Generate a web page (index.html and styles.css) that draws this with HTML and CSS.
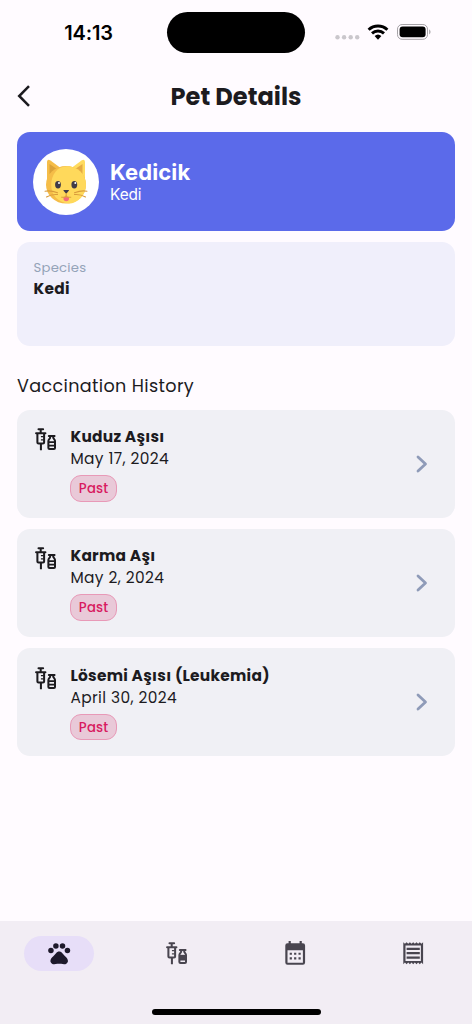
FILE: index.html
```html
<!DOCTYPE html>
<html lang="en">
<head>
<meta charset="utf-8">
<title>Pet Details</title>
<link rel="stylesheet" href="styles.css">
</head>
<body>
<svg class="defs" aria-hidden="true">
  <symbol id="vaccine" viewBox="0 0 24 24">
    <g fill="none" stroke="currentColor" stroke-width="1.850" stroke-linejoin="round">
      <path d="M5 3h4.200M2.800 6.500h8.500" stroke-linecap="round"/>
      <path d="M7 3v3.500M4 6.500V15q0 1 1 1h4.100q1 0 1-1V6.500M7.200 16v6"/>
      <path d="M7.200 9.600h2.500M7.200 12.600h2.500" stroke-width="1.200"/>
      <path d="M14.400 9h5.200" stroke-linecap="round"/>
      <path d="M15.600 9v1.500c0 1-1.600 1.500-1.600 3.200V20q0 1 1 1h4q1 0 1-1v-6.300c0-1.700-1.600-2.200-1.600-3.200V9"/>
      <path d="M14 14.700h6M14 17.800h6" stroke-width="1.600"/>
    </g>
  </symbol>
  <symbol id="next" viewBox="0 0 12 18"><path d="M2 2l7.500 7L2 16" fill="none" stroke="currentColor" stroke-width="2.800" stroke-linecap="round" stroke-linejoin="round"/></symbol>
</svg>
<div class="screen">
  <header class="status">
    <span class="time">14:13</span>
    <span class="island"></span>
    <svg class="signals" viewBox="0 0 98 20">
      <g fill="#cac7cc"><circle cx="2.500" cy="13.200" r="2.200"/><circle cx="9.100" cy="13.200" r="2.200"/><circle cx="15.700" cy="13.200" r="2.200"/><circle cx="22.200" cy="13.200" r="2.200"/></g>
      <g fill="none" stroke="#000" stroke-width="2.900"><path d="M33.600 5.800a13.500 13.500 0 0 1 18.800 0"/><path d="M37 9.400a8.700 8.700 0 0 1 12 0"/></g>
      <path d="M39.600 12.100a5 5 0 0 1 6.800 0L43 15.700z"/>
      <rect x="62.500" y=".5" width="30" height="14.800" rx="4.600" fill="none" stroke="#a5a2a6"/>
      <rect x="64.600" y="2.600" width="26" height="10.600" rx="3"/>
      <path d="M94.200 5.200q2.700 2.700 0 5.400z" fill="#a5a2a6"/>
    </svg>
  </header>
  <div class="appbar">
    <svg class="back" viewBox="0 0 14 22"><path d="M12 1.200L2.200 11 12 20.800" fill="none" stroke="#1c1b1f" stroke-width="2.500"/></svg>
    <h1>Pet Details</h1>
  </div>
  <main>
    <section class="hero">
      <svg class="avatar" viewBox="0 0 66 66">
        <circle cx="33" cy="33" r="33" fill="#fff"/>
        <path d="M14 33V12.500Q14.500 9.800 17.500 11.500L29 20z" fill="#f5bd48"/>
        <path d="M52 33V12.500Q51.500 9.800 48.500 11.500L37 20z" fill="#ffdb5e"/>
        <path d="M16.500 25V15l8 5.500z" fill="#dba239"/><path d="M49.500 25V15l-8 5.500z" fill="#e5aa43"/>
        <ellipse cx="33" cy="35.800" rx="20" ry="18.800" fill="#f5bd48"/>
        <path d="M34 17.200c10.500 0 19 8 19 18.500S45 54.500 35.500 54.500C25 53.500 18.200 46 18.200 36S24 17.200 34 17.200z" fill="#ffd95b"/>
        <ellipse cx="25" cy="35.800" rx="2.900" ry="3.700" fill="#403b48"/><ellipse cx="41.300" cy="35.800" rx="2.900" ry="3.700" fill="#403b48"/>
        <circle cx="26" cy="34" r="1" fill="#fff"/><circle cx="42.300" cy="34" r="1" fill="#fff"/>
        <path d="M30.500 48h5.500v1.500a2.750 2.750 0 0 1-5.500 0z" fill="#f36b7d"/>
        <path d="M33.200 43v3q0 2.300-2.600 2.300h-2.400M33.200 46q0 2.300 2.600 2.300h2.400" fill="none" stroke="#dda33b" stroke-width="1.100"/>
        <path d="M30.700 41h5q.5 0 .1.700l-1.700 2.100q-.9 1-1.800 0l-1.700-2.100q-.4-.7.100-.7z" fill="#403b48"/>
        <g fill="none" stroke="#d99b3b" stroke-width="1.100" stroke-linecap="round"><path d="M12 42.200q6-1 12.500 1.600M13.500 48q5-3 11-2.500M54 42.200q-6-1-12.500 1.600M52.500 48q-5-3-11-2.500"/></g>
      </svg>
      <div><div class="name">Kedicik</div><div class="kind">Kedi</div></div>
    </section>
    <section class="species"><div class="label">Species</div><div class="value">Kedi</div></section>
    <h2>Vaccination History</h2>
    <ul class="list">
      <li><svg class="icon"><use href="#vaccine"/></svg><div class="body"><div class="vaccine">Kuduz Aşısı</div><div class="date">May 17, 2024</div><span class="chip">Past</span></div><svg class="next"><use href="#next"/></svg></li>
      <li><svg class="icon"><use href="#vaccine"/></svg><div class="body"><div class="vaccine">Karma Aşı</div><div class="date">May 2, 2024</div><span class="chip">Past</span></div><svg class="next"><use href="#next"/></svg></li>
      <li><svg class="icon"><use href="#vaccine"/></svg><div class="body"><div class="vaccine">Lösemi Aşısı (Leukemia)</div><div class="date">April 30, 2024</div><span class="chip">Past</span></div><svg class="next"><use href="#next"/></svg></li>
    </ul>
  </main>
  <nav>
    <div class="tabs">
      <span class="tab active"><svg class="icon" viewBox="0 0 24 24"><circle cx="4.500" cy="9.500" r="2.500"/><circle cx="9" cy="5.500" r="2.500"/><circle cx="15" cy="5.500" r="2.500"/><circle cx="19.500" cy="9.500" r="2.500"/><path d="M17.340 14.860c-.87-1.020-1.600-1.890-2.480-2.910-.46-.54-1.050-1.080-1.750-1.320-.11-.04-.22-.07-.33-.09-.25-.04-.52-.04-.78-.04s-.53 0-.79.050c-.11.020-.22.050-.33.090-.7.240-1.280.780-1.750 1.320-.87 1.020-1.600 1.890-2.480 2.910-1.310 1.310-2.920 2.760-2.620 4.790.29 1.020 1.020 2.030 2.330 2.320.73.150 3.060-.44 5.540-.44h.18c2.480 0 4.810.58 5.540.44 1.310-.29 2.040-1.310 2.330-2.320.31-2.040-1.300-3.490-2.610-4.800z"/></svg></span>
      <span class="tab"><svg class="icon" viewBox="0 0 24 24"><use href="#vaccine"/><path d="M14 13.500h6v4h-6z"/></svg></span>
      <span class="tab"><svg class="icon" viewBox="0 0 24 24"><path fill-rule="evenodd" d="M6 1h2v2h8V1h2v2h1a2 2 0 0 1 2 2v15.500a2 2 0 0 1-2 2H5a2 2 0 0 1-2-2V5a2 2 0 0 1 2-2h1zM5 9.300v11.300h14V9.300z"/><path d="M7 11.500h2v2H7zM11 11.500h2v2h-2zM15 11.500h2v2h-2zM7 15.800h2v2H7zM11 15.800h2v2h-2zM15 15.800h2v2h-2z"/></svg></span>
      <span class="tab"><svg class="icon" viewBox="0 0 24 24"><path d="M19.500 3.500L18 2l-1.500 1.500L15 2l-1.500 1.500L12 2l-1.500 1.500L9 2 7.500 3.500 6 2 4.500 3.500 3 2v20l1.500-1.500L6 22l1.500-1.500L9 22l1.500-1.500L12 22l1.500-1.500L15 22l1.500-1.500L18 22l1.500-1.500L21 22V2zM19 19.090H5V4.910h14zM6 15h12v2H6zM6 11h12v2H6zM6 7h12v2H6z"/></svg></span>
    </div>
    <span class="home"></span>
  </nav>
</div>
</body>
</html>
```

FILE: styles.css
```css
* { box-sizing: border-box; }
body { margin: 0; background: #fffbff; color: #1c1b1f; font-family: Poppins, Inter, sans-serif; }
.defs { display: none; }
.screen { width: 472px; height: 1024px; display: flex; flex-direction: column; overflow: hidden; }
.status { height: 65px; display: grid; grid-template-columns: 167px 138px 1fr; align-items: center; flex: none; }
.time { padding-left: 10px; text-align: center; font: 600 20px/24px Inter, sans-serif; letter-spacing: -.2px; color: #000; }
.island { height: 41px; border-radius: 21px; background: #000; }
.signals { width: 98px; height: 20px; margin-left: 29.500px; margin-top: 2.500px; }
.appbar { height: 67px; display: grid; grid-template-columns: 40px 1fr 40px; align-items: center; flex: none; padding: 0 17px 5px; }
.back { width: 14px; height: 22px; }
h1 { margin: 1px 0 0; text-align: center; font-size: 24.100px; line-height: 31px; font-weight: 700; }
main { flex: 1; padding: 0 17px; }
.hero { height: 99px; border-radius: 13px; background: #5b6aea; display: flex; align-items: center; padding: 0 16px; gap: 11px; color: #fff; }
.avatar { width: 66px; height: 66px; }
.name { font: 700 22px/25px Inter, sans-serif; letter-spacing: .1px; }
.kind { font: 400 15.400px/19px Inter, sans-serif; letter-spacing: -.1px; }
.species { height: 104px; margin-top: 11px; border-radius: 13px; background: #f0effb; padding: 16px 16.500px; }
.label { font-size: 13.200px; line-height: 20px; color: #94a3b8; letter-spacing: .25px; }
.value { font-size: 15.400px; line-height: 21px; font-weight: 700; letter-spacing: .25px; }
h2 { margin: 25px 0 8.500px; font-size: 17.600px; line-height: 30px; font-weight: 400; letter-spacing: .35px; }
.list { list-style: none; margin: 0; padding: 0; display: grid; gap: 11.300px; }
.list li { height: 108px; border-radius: 13px; background: #f0f0f5; display: flex; align-items: center; padding: 0 27px 0 16px; }
.icon { width: 26.400px; height: 26.400px; fill: currentColor; }
.list .icon { align-self: flex-start; margin-top: 16.500px; }
.body { flex: 1; margin-left: 11px; padding-top: .8px; }
.vaccine, .date { font-size: 15.400px; line-height: 22px; white-space: nowrap; }
.vaccine { font-weight: 700; letter-spacing: .27px; }
.date { letter-spacing: .4px; }
.chip { display: block; width: 46.500px; height: 26.500px; margin-top: 5px; border: 1px solid #e899b7; border-radius: 11px; background: #e9c9d8; color: #d81b60; text-align: center; font-size: 13.200px; line-height: 25px; font-weight: 500; letter-spacing: .2px; }
.next { width: 12px; height: 18px; color: #8f9bb8; }
nav { height: 103.500px; background: #f2edf4; display: flex; flex-direction: column; justify-content: space-between; align-items: center; padding: 15px 0 9px; flex: none; }
.tabs { width: 100%; display: grid; grid-template-columns: repeat(4, 1fr); justify-items: center; color: #49454f; }
.tab { width: 70px; height: 35px; border-radius: 18px; display: flex; align-items: center; justify-content: center; }
.active { background: #e7def8; color: #1d192b; }
.home { width: 169px; height: 6px; border-radius: 3px; background: #000; }
```
